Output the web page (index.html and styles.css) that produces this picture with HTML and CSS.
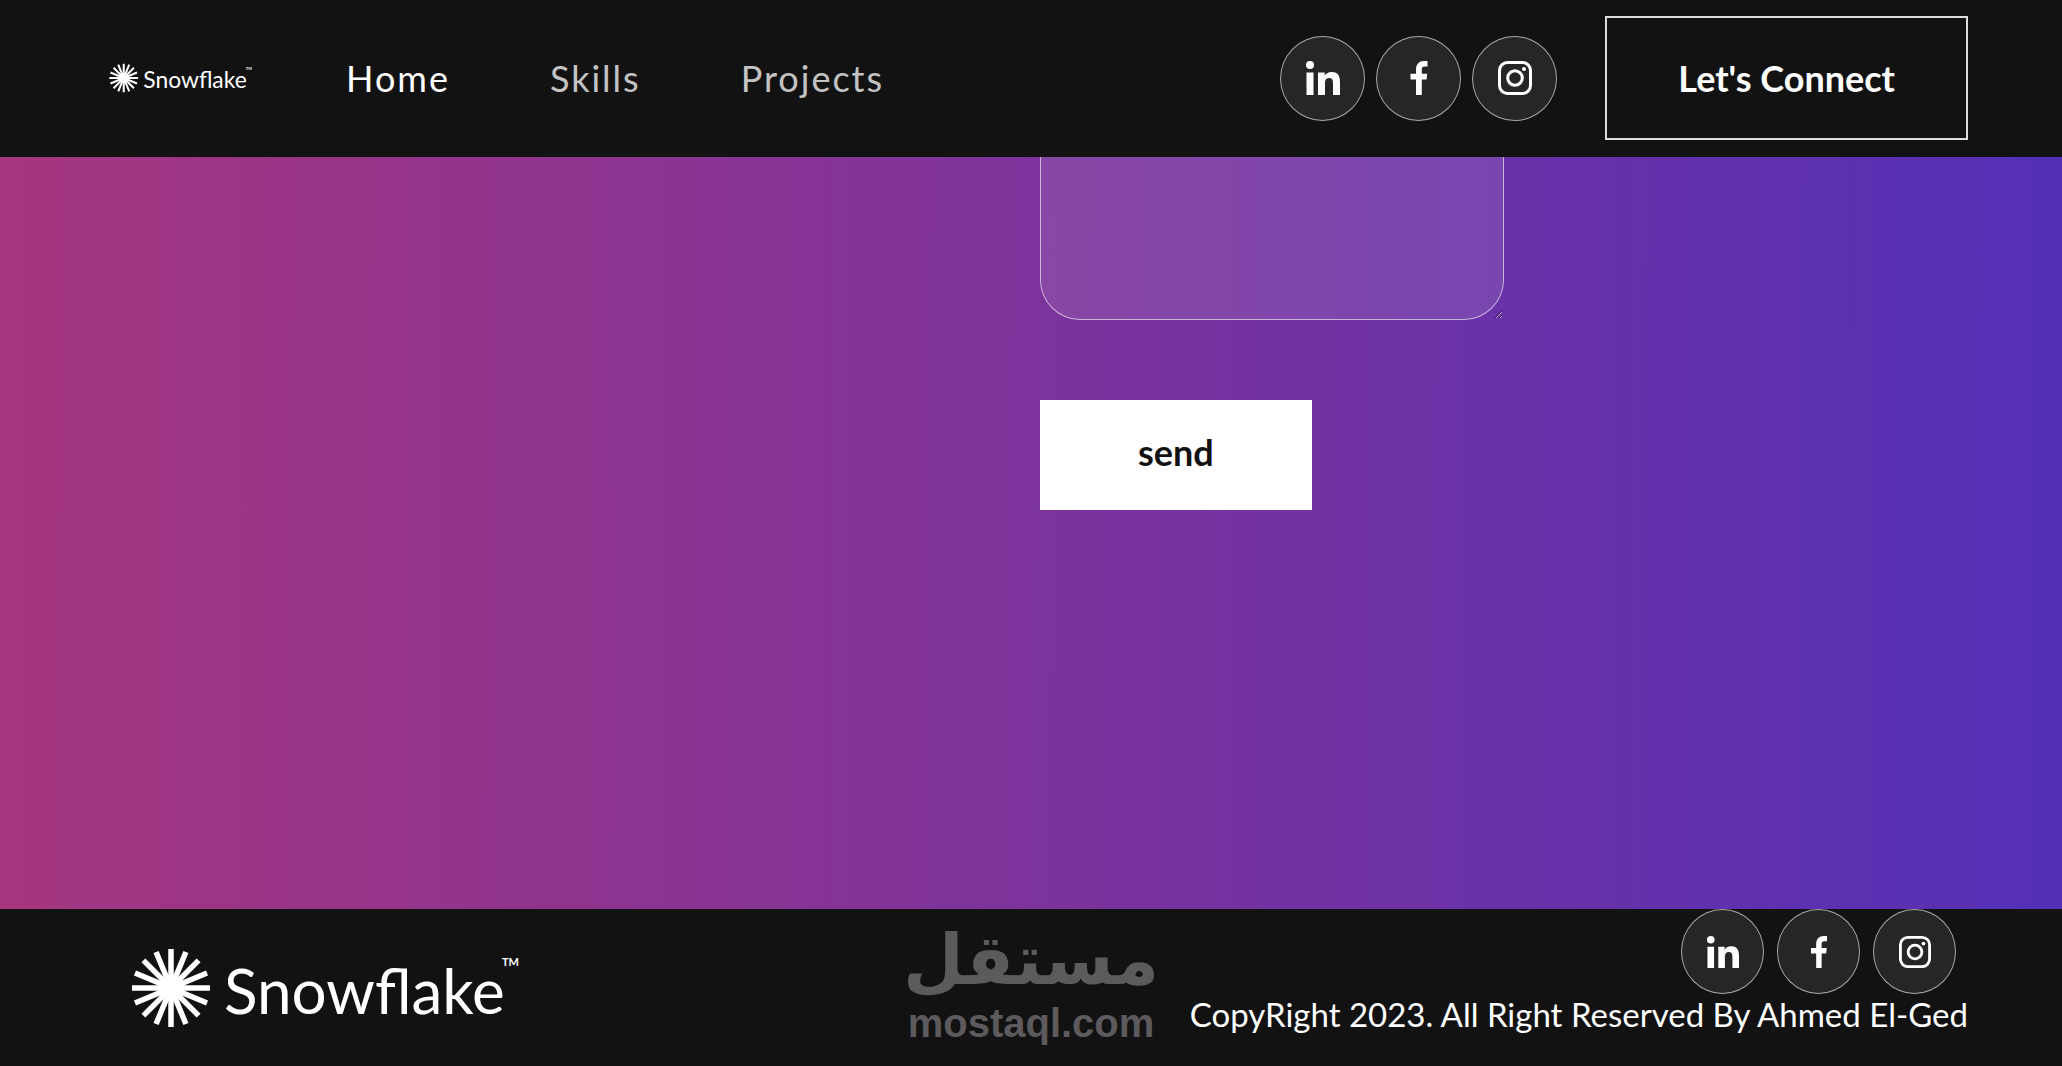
FILE: index.html
```html
<!DOCTYPE html>
<html lang="en">
  <head>
    <meta charset="UTF-8" />
    <meta name="viewport" content="width=device-width, initial-scale=1.0" />
    <title>Snowflake Portfolio</title>
    <link rel="stylesheet" href="styles.css">
  </head>
  <body>
    <svg class="sprite" aria-hidden="true">
      <symbol id="logo" viewBox="0 0 388 80">
        <g stroke="#fff" stroke-width="5.5">
          <path id="ray" d="M40 1V79M1 40H79" />
          <use href="#ray" transform="rotate(22.5 40 40)" />
          <use href="#ray" transform="rotate(45 40 40)" />
          <use href="#ray" transform="rotate(67.5 40 40)" />
        </g>
        <circle cx="40" cy="40" r="13" fill="#fff" />
        <text class="logo-name" x="93" y="66">Snowflake</text>
        <text class="logo-tm" x="371" y="18">TM</text>
      </symbol>
      <symbol id="linkedin" viewBox="0 0 34 34">
        <circle cx="4" cy="4" r="4" />
        <path d="M.5 11.500h7V34h-7zM12 11.500h6.700v3.100c1-1.900 3.400-3.700 7-3.700 7 0 8.300 4.700 8.300 10.700V34h-7V23.100c0-2.600 0-6-3.700-6s-4.300 2.900-4.300 5.800V34h-7z" />
      </symbol>
      <symbol id="facebook" viewBox="0 0 34 34">
        <path d="M14 34V18.500H8.500v-5.700H14V8.600C14 3 17.300 0 22 0h3.500v5.600h-3c-2 0-2.700 1-2.700 2.900v4.300h5.400l-.6 5.700h-4.800V34z" />
      </symbol>
      <symbol id="instagram" viewBox="0 0 34 34">
        <rect x="1.500" y="1.500" width="31" height="31" rx="8" fill="none" stroke="#fff" stroke-width="3" />
        <circle cx="17" cy="17" r="7.300" fill="none" stroke="#fff" stroke-width="3" />
        <circle cx="26" cy="8" r="2" />
      </symbol>
    </svg>

    <header class="navbar">
      <a class="brand" href="#home" aria-label="Snowflake">
        <svg class="logo"><use href="#logo" /></svg>
      </a>
      <nav class="nav-links">
        <a class="nav-link active" href="#home">Home</a>
        <a class="nav-link" href="#skills">Skills</a>
        <a class="nav-link" href="#projects">Projects</a>
      </nav>
      <div class="social">
        <a href="#linkedin" aria-label="LinkedIn"><svg><use href="#linkedin" /></svg></a>
        <a href="#facebook" aria-label="Facebook"><svg><use href="#facebook" /></svg></a>
        <a href="#instagram" aria-label="Instagram"><svg><use href="#instagram" /></svg></a>
      </div>
      <button class="connect-btn" type="button">Let's Connect</button>
    </header>

    <main class="contact">
      <form class="contact-form">
        <textarea aria-label="Message"></textarea>
        <button class="send-btn" type="button">send</button>
      </form>
    </main>

    <footer class="footer">
      <svg class="footer-logo" role="img" aria-label="Snowflake"><use href="#logo" /></svg>
      <div class="watermark">
        <span class="watermark-ar" lang="ar" dir="rtl">مستقل</span>
        <span class="watermark-en">mostaql.com</span>
      </div>
      <div class="footer-right">
        <div class="social">
          <a href="#linkedin" aria-label="LinkedIn"><svg><use href="#linkedin" /></svg></a>
          <a href="#facebook" aria-label="Facebook"><svg><use href="#facebook" /></svg></a>
          <a href="#instagram" aria-label="Instagram"><svg><use href="#instagram" /></svg></a>
        </div>
        <p class="copyright">CopyRight 2023. All Right Reserved By Ahmed El-Ged</p>
      </div>
    </footer>
  </body>
</html>
```

FILE: styles.css
```css
* {
  box-sizing: border-box;
}
body {
  display: flex;
  flex-direction: column;
  min-height: 100vh;
  margin: 0;
  background-color: #121212;
  color: #fff;
  font-family: Lato, sans-serif;
}
a {
  color: inherit;
  text-decoration: none;
}
button {
  font-family: inherit;
  font-size: 36px;
  font-weight: 700;
  cursor: pointer;
}
.sprite {
  display: none;
}

/* logo */
.logo-name {
  fill: #fff;
  font-family: Lato, sans-serif;
  font-size: 62px;
}
.logo-tm {
  fill: #fff;
  font-family: Lato, sans-serif;
  font-size: 11px;
  font-weight: 700;
}

/* navbar */
.navbar {
  display: flex;
  align-items: center;
  padding: 16px 94px 17px 109px;
}
.brand {
  display: flex;
}
.logo {
  width: 143px;
  height: 30px;
}
.nav-links {
  display: flex;
  gap: 100px;
  margin: 0 auto 0 94px;
}
.nav-link {
  font-size: 36px;
  letter-spacing: 2px;
  opacity: 0.75;
}
.nav-link.active {
  opacity: 1;
}
.social {
  display: flex;
  gap: 11px;
}
.social a {
  display: flex;
  align-items: center;
  justify-content: center;
  width: 85px;
  height: 85px;
  border: 1px solid rgba(255, 255, 255, 0.6);
  border-radius: 50%;
  background-color: rgba(217, 217, 217, 0.1);
}
.social svg {
  width: 34px;
  height: 34px;
  fill: #fff;
}
.connect-btn {
  margin-left: 48px;
  padding: 38px 71px;
  border: 2px solid #ddd;
  background-color: transparent;
  color: #fff;
}

/* contact */
.contact {
  display: grid;
  grid-template-columns: 1fr 1fr;
  flex: 1;
  padding: 0 94px;
  background: linear-gradient(90.21deg, #aa367c -5.91%, #4a2fbd 111.58%);
}
.contact-form {
  grid-column: 2;
  padding-left: 9px;
}
.contact-form textarea {
  display: block;
  width: 50%;
  height: 163px;
  padding: 16px 40px;
  border: 1px solid rgba(255, 255, 255, 0.6);
  border-top: 0;
  border-radius: 0 0 40px 40px;
  background-color: rgba(255, 255, 255, 0.1);
  color: #fff;
  font: inherit;
  font-size: 32px;
}
.send-btn {
  margin-top: 80px;
  padding: 30px 98px 36px;
  border: 0;
  background-color: #fff;
  color: #121212;
}

/* footer */
.footer {
  position: relative;
  display: flex;
  align-items: center;
  justify-content: space-between;
  padding: 0 94px 0 131px;
}
.footer-logo {
  width: 388px;
  height: 80px;
}
.footer-right {
  display: flex;
  flex-direction: column;
  align-items: flex-end;
  padding-bottom: 32px;
}
.footer-right .social {
  gap: 13px;
  padding-right: 12px;
}
.footer-right .social a {
  width: 83px;
}
.footer-right .social svg {
  width: 32px;
  height: 32px;
}
.copyright {
  margin: 0;
  font-size: 33px;
  line-height: 40px;
}
.watermark {
  position: absolute;
  top: 16px;
  left: 50%;
  display: flex;
  flex-direction: column;
  gap: 8px;
  align-items: center;
  transform: translateX(-50%);
  color: #5c5a5c;
  font-weight: 700;
}
.watermark-ar {
  font-family: "DejaVu Sans", sans-serif;
  font-size: 70px;
  line-height: 70px;
}
.watermark-en {
  font-family: "Liberation Sans", sans-serif;
  font-size: 40px;
  line-height: 40px;
}
```
